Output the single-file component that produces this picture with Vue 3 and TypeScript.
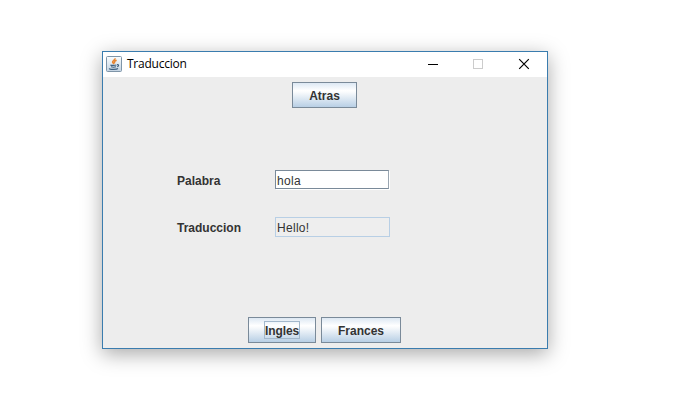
<script setup lang="ts">
import { ref } from 'vue'

type Language = 'en' | 'fr'

const word = ref('hola')
const translation = ref('Hello!')

const dictionary: Record<Language, Record<string, string>> = {
  en: { hola: 'Hello!' },
  fr: { hola: 'Bonjour!' },
}

function translate(language: Language): void {
  translation.value = dictionary[language][word.value.toLowerCase()] ?? ''
}
</script>

<template>
  <main class="desktop">
    <section class="window">
      <header class="titlebar">
        <svg class="java" width="16" height="16" viewBox="0 0 16 16">
          <defs>
            <linearGradient id="tile" x1="0" y1="0" x2="0" y2="1">
              <stop offset="0" stop-color="#fbfdfe" />
              <stop offset="1" stop-color="#c3d3e2" />
            </linearGradient>
          </defs>
          <rect x=".5" y=".5" width="15" height="15" rx="1" fill="url(#tile)" stroke="#7f95a8" />
          <path d="M9 2.2C9.6 4 6 4.7 6.6 6.3L8 8M10.6 4.2C8.3 5.2 8 6 8.8 7.4" fill="none" stroke="#e88632" stroke-width="1.5" />
          <path d="M4.4 8.9C5.5 9.6 9 9.5 10.4 9M5 10.8C6.5 11.3 8.8 11.2 10 10.8M3.3 12.3C3.5 13.7 10.7 13.8 12 12.5M11 8.7C13.2 8.3 13 10.2 11.2 10.7" fill="none" stroke="#3f607f" stroke-width="1.15" />
        </svg>
        <span class="title">Traduccion</span>
        <div class="controls">
          <svg width="46" height="25" viewBox="0 0 46 25"><path d="M18 12.5h10" stroke="#000" /></svg>
          <svg width="46" height="25" viewBox="0 0 46 25"><rect x="17.5" y="7.5" width="9" height="9" fill="none" stroke="#ccc" /></svg>
          <svg width="46" height="25" viewBox="0 0 46 25"><path d="M17.2 7.2l9.6 9.6M26.8 7.2l-9.6 9.6" stroke="#000" stroke-width="1.2" /></svg>
        </div>
      </header>
      <div class="content">
        <div class="row"><button class="button back">Atras</button></div>
        <div class="form">
          <label for="word">Palabra</label>
          <input id="word" v-model="word" class="field" type="text" />
          <label for="result">Traduccion</label>
          <input id="result" :value="translation" class="field readonly" type="text" readonly />
        </div>
        <div class="row">
          <button class="button english" @click="translate('en')"><span class="focus">Ingles</span></button>
          <button class="button french" @click="translate('fr')">Frances</button>
        </div>
      </div>
    </section>
  </main>
</template>

<style>
body {
  margin: 0;
  background: #fff;
}
</style>

<style scoped>
.desktop {
  box-sizing: border-box;
  height: 419px;
  padding: 51px 0 0 102px;
  overflow: hidden;
}
.window {
  box-sizing: border-box;
  display: flex;
  flex-direction: column;
  width: 446px;
  height: 298px;
  border: 1px solid #3a7cae;
  background: #ededed;
  box-shadow: 0 5px 19px rgba(0, 0, 0, 0.34);
}
.titlebar {
  display: flex;
  align-items: flex-start;
  height: 25px;
  padding-left: 3px;
  background: #fff;
}
.java {
  margin-top: 4px;
}
.title {
  margin: 4px 0 0 5px;
  font: 12px/16px "Open Sans", "Noto Sans", sans-serif;
  letter-spacing: -0.25px;
  color: #000;
}
.controls {
  display: flex;
  margin: 0 -1px 0 auto;
}
.content {
  display: flex;
  flex: 1;
  flex-direction: column;
  justify-content: space-between;
  padding: 5px 0;
  font: bold 12px/16px "Liberation Sans", Arial, sans-serif;
  color: #333;
}
.row {
  display: flex;
  justify-content: center;
  gap: 5px;
  padding-right: 1px;
}
.button {
  box-sizing: border-box;
  display: flex;
  align-items: center;
  justify-content: center;
  height: 26px;
  padding: 1px 0 0;
  border: 1px solid #7a8a99;
  border-radius: 0;
  background: linear-gradient(#dde8f3 0, #fff 32%, #f8fafc 40%, #b8cfe5 100%);
  font: inherit;
  color: inherit;
}
.back {
  width: 65px;
}
.english {
  width: 68px;
}
.french {
  width: 80px;
}
.focus {
  box-sizing: border-box;
  height: 18px;
  margin-top: -1px;
  border: 1px solid #a3b8cc;
  line-height: 18px;
  letter-spacing: -0.1px;
}
.form {
  display: grid;
  grid-template-columns: 98px 115px;
  row-gap: 27px;
  align-items: center;
  padding: 0 0 18px 74px;
}
.form label {
  padding-top: 2px;
}
.field {
  box-sizing: border-box;
  width: 115px;
  height: 20px;
  padding: 2px 1px 0;
  border: 1px solid #7a8a99;
  border-radius: 0;
  outline: 0;
  background: #fff;
  box-shadow: none;
  font: 12px/16px "Liberation Sans", Arial, sans-serif;
  letter-spacing: 0.3px;
  color: #333;
}
.field:not(.readonly) {
  width: 114px;
  height: 19px;
  margin-bottom: 1px;
  border-right-color: #9aa6b1;
  box-shadow: 1px 1px #fff;
}
.readonly {
  border-color: #b8cfe5;
  background: #eee;
}
</style>
